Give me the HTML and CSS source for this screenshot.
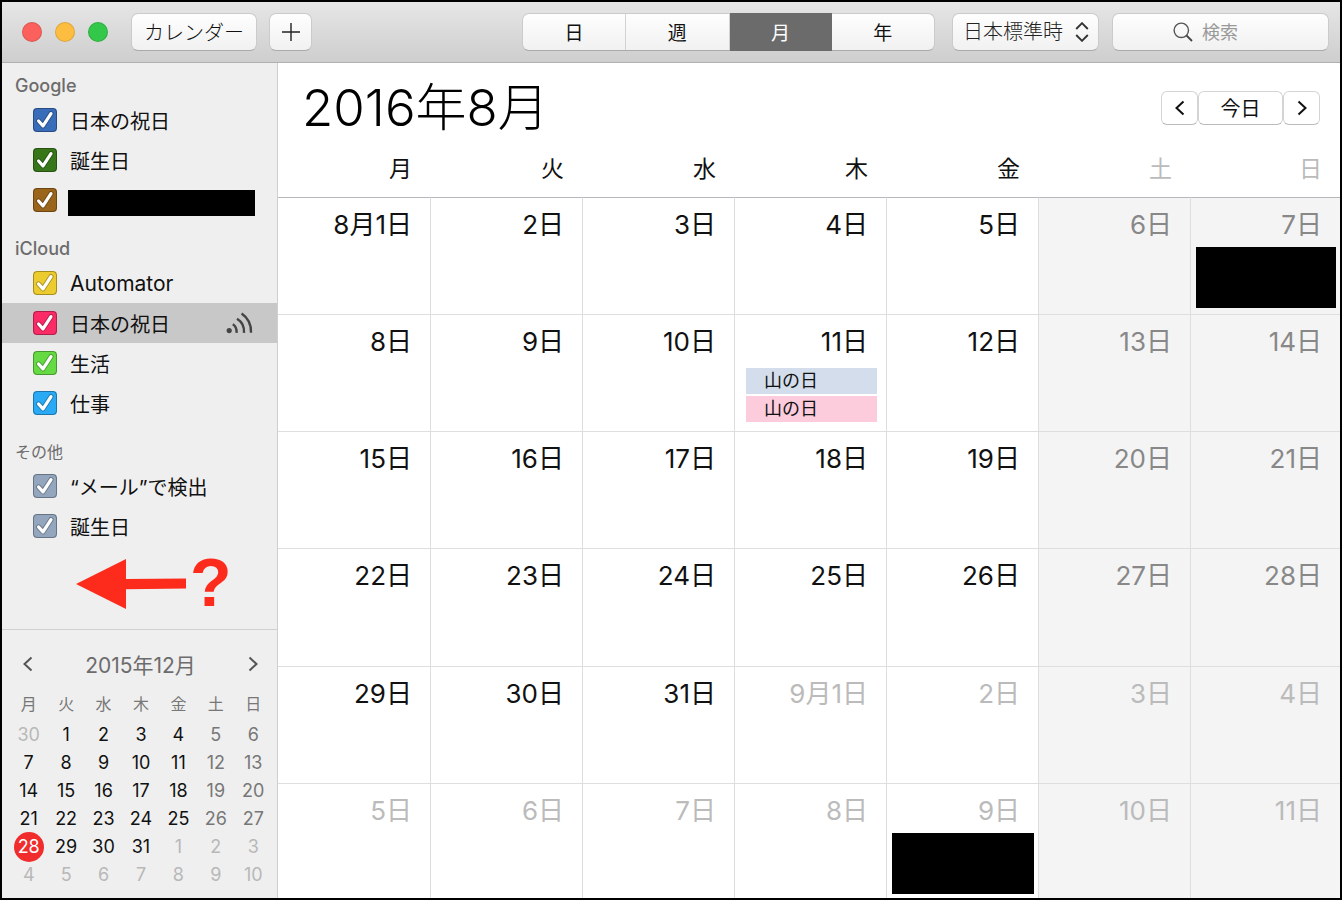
FILE: index.html
```html
<!DOCTYPE html>
<html lang="ja">

<head>
    <meta charset="UTF-8">
    <meta name="viewport" content="width=device-width, initial-scale=1.0">
    <title>カレンダー</title>
    <link rel="stylesheet" href="styles.css">
</head>

<body>
    <svg class="defs" width="0" height="0" aria-hidden="true">
        <symbol id="tick" viewBox="0 0 24 24">
            <path d="M5.600 13l4.400 4.800 8-12.200" fill="none" stroke="#000" stroke-opacity=".25" stroke-width="5.200" stroke-linecap="round" stroke-linejoin="round" />
            <path d="M5.600 13l4.400 4.800 8-12.200" fill="none" stroke="#fff" stroke-width="3.200" stroke-linecap="round" stroke-linejoin="round" />
        </symbol>
        <symbol id="prev" viewBox="0 0 10 16">
            <path d="M8.5 1.5L1.5 8l7 6.5" fill="none" stroke="currentColor" stroke-width="2" />
        </symbol>
        <symbol id="next" viewBox="0 0 10 16">
            <path d="M1.5 1.5l7 6.5-7 6.5" fill="none" stroke="currentColor" stroke-width="2" />
        </symbol>
    </svg>

    <div class="window">
        <header class="toolbar">
            <div class="lights">
                <button class="light close" aria-label="閉じる"></button>
                <button class="light minimize" aria-label="しまう"></button>
                <button class="light zoom" aria-label="拡大"></button>
            </div>
            <button class="btn calendars">カレンダー</button>
            <button class="btn add" aria-label="追加">
                <svg width="18" height="18" viewBox="0 0 18 18"><path d="M9 0v18M0 9h18" stroke="#222" stroke-width="1.4" /></svg>
            </button>
            <div class="segments">
                <button>日</button>
                <button>週</button>
                <button class="active">月</button>
                <button>年</button>
            </div>
            <div class="btn timezone">
                <select aria-label="時間帯">
                    <option>日本標準時</option>
                </select>
                <svg width="14" height="20" viewBox="0 0 14 20"><path d="M1.2 7L7 1.2 12.8 7M1.2 13L7 18.8 12.8 13" fill="none" stroke="#333" stroke-width="1.9" /></svg>
            </div>
            <label class="btn search">
                <svg width="20" height="20" viewBox="0 0 20 20"><circle cx="8.3" cy="8.3" r="7.2" fill="none" stroke="#555" stroke-width="1.4" /><path d="M13.5 13.5l5.5 5.5" stroke="#444" stroke-width="1.8" /></svg>
                <input type="text" placeholder="検索" aria-label="検索">
            </label>
        </header>

        <div class="content">
            <aside class="sidebar">
                <div class="lists">
                    <h2>Google</h2>
                    <ul>
                        <li><label><span class="check blue"><input type="checkbox" checked><svg><use href="#tick" /></svg></span>日本の祝日</label></li>
                        <li><label><span class="check green"><input type="checkbox" checked><svg><use href="#tick" /></svg></span>誕生日</label></li>
                        <li><label><span class="check brown"><input type="checkbox" checked aria-label="非公開"><svg><use href="#tick" /></svg></span><span class="hidden-name"></span></label></li>
                    </ul>
                    <h2>iCloud</h2>
                    <ul>
                        <li><label class="latin"><span class="check yellow"><input type="checkbox" checked><svg><use href="#tick" /></svg></span>Automator</label></li>
                        <li class="selected">
                            <label><span class="check pink"><input type="checkbox" checked><svg><use href="#tick" /></svg></span>日本の祝日</label>
                            <svg class="feed" width="28" height="22" viewBox="0 0 28 22">
                                <circle cx="3.2" cy="18.6" r="2.6" fill="#444" />
                                <path d="M6.8 12.2q4.200 2.600 3.800 8.600M11 6.800q7.600 4.600 7 14M15.600 1.500q10 6.800 9.400 19.300" fill="none" stroke="#444" stroke-width="2.400" />
                            </svg>
                        </li>
                        <li><label><span class="check lime"><input type="checkbox" checked><svg><use href="#tick" /></svg></span>生活</label></li>
                        <li><label><span class="check sky"><input type="checkbox" checked><svg><use href="#tick" /></svg></span>仕事</label></li>
                    </ul>
                    <h2 class="small">その他</h2>
                    <ul>
                        <li><label><span class="check gray"><input type="checkbox" checked><svg><use href="#tick" /></svg></span>“メール”で検出</label></li>
                        <li><label><span class="check gray"><input type="checkbox" checked><svg><use href="#tick" /></svg></span>誕生日</label></li>
                    </ul>
                    <div class="note">
                        <svg width="110" height="50" viewBox="0 0 110 50"><path d="M0 25L50 0v20l60-.5v10l-60 .8V50z" fill="#fd2b1c" /></svg>
                        <span>?</span>
                    </div>
                </div>

                <div class="mini">
                    <div class="mini-head">
                        <button aria-label="前の月"><svg width="10" height="16"><use href="#prev" /></svg></button>
                        <span>2015年12月</span>
                        <button aria-label="次の月"><svg width="10" height="16"><use href="#next" /></svg></button>
                    </div>
                    <table>
                        <thead>
                            <tr><th>月</th><th>火</th><th>水</th><th>木</th><th>金</th><th>土</th><th>日</th></tr>
                        </thead>
                        <tbody>
                            <tr><td class="out">30</td><td>1</td><td>2</td><td>3</td><td>4</td><td>5</td><td>6</td></tr>
                            <tr><td>7</td><td>8</td><td>9</td><td>10</td><td>11</td><td>12</td><td>13</td></tr>
                            <tr><td>14</td><td>15</td><td>16</td><td>17</td><td>18</td><td>19</td><td>20</td></tr>
                            <tr><td>21</td><td>22</td><td>23</td><td>24</td><td>25</td><td>26</td><td>27</td></tr>
                            <tr><td><span class="today">28</span></td><td>29</td><td>30</td><td>31</td><td class="out">1</td><td class="out">2</td><td class="out">3</td></tr>
                            <tr><td class="out">4</td><td class="out">5</td><td class="out">6</td><td class="out">7</td><td class="out">8</td><td class="out">9</td><td class="out">10</td></tr>
                        </tbody>
                    </table>
                </div>
            </aside>

            <main class="main">
                <div class="month-head">
                    <h1>2016年8月</h1>
                    <div class="nav">
                        <button class="arrow" aria-label="前の月"><svg width="10" height="16"><use href="#prev" /></svg></button>
                        <button class="today-btn">今日</button>
                        <button class="arrow" aria-label="次の月"><svg width="10" height="16"><use href="#next" /></svg></button>
                    </div>
                </div>
                <table class="month">
                    <thead>
                        <tr><th>月</th><th>火</th><th>水</th><th>木</th><th>金</th><th>土</th><th>日</th></tr>
                    </thead>
                    <tbody>
                        <tr>
                            <td><div class="date">8月1日</div></td>
                            <td><div class="date">2日</div></td>
                            <td><div class="date">3日</div></td>
                            <td><div class="date">4日</div></td>
                            <td><div class="date">5日</div></td>
                            <td><div class="date">6日</div></td>
                            <td><div class="date">7日</div><div class="hidden-event"></div></td>
                        </tr>
                        <tr>
                            <td><div class="date">8日</div></td>
                            <td><div class="date">9日</div></td>
                            <td><div class="date">10日</div></td>
                            <td>
                                <div class="date">11日</div>
                                <div class="events">
                                    <div class="event blue-event">山の日</div>
                                    <div class="event pink-event">山の日</div>
                                </div>
                            </td>
                            <td><div class="date">12日</div></td>
                            <td><div class="date">13日</div></td>
                            <td><div class="date">14日</div></td>
                        </tr>
                        <tr>
                            <td><div class="date">15日</div></td>
                            <td><div class="date">16日</div></td>
                            <td><div class="date">17日</div></td>
                            <td><div class="date">18日</div></td>
                            <td><div class="date">19日</div></td>
                            <td><div class="date">20日</div></td>
                            <td><div class="date">21日</div></td>
                        </tr>
                        <tr>
                            <td><div class="date">22日</div></td>
                            <td><div class="date">23日</div></td>
                            <td><div class="date">24日</div></td>
                            <td><div class="date">25日</div></td>
                            <td><div class="date">26日</div></td>
                            <td><div class="date">27日</div></td>
                            <td><div class="date">28日</div></td>
                        </tr>
                        <tr>
                            <td><div class="date">29日</div></td>
                            <td><div class="date">30日</div></td>
                            <td><div class="date">31日</div></td>
                            <td class="out"><div class="date">9月1日</div></td>
                            <td class="out"><div class="date">2日</div></td>
                            <td class="out"><div class="date">3日</div></td>
                            <td class="out"><div class="date">4日</div></td>
                        </tr>
                        <tr>
                            <td class="out"><div class="date">5日</div></td>
                            <td class="out"><div class="date">6日</div></td>
                            <td class="out"><div class="date">7日</div></td>
                            <td class="out"><div class="date">8日</div></td>
                            <td class="out"><div class="date">9日</div><div class="hidden-event"></div></td>
                            <td class="out"><div class="date">10日</div></td>
                            <td class="out"><div class="date">11日</div></td>
                        </tr>
                    </tbody>
                </table>
            </main>
        </div>
    </div>
</body>

</html>
```
FILE: styles.css
```css
* {
    box-sizing: border-box;
    margin: 0;
    padding: 0;
}

body,
button,
input,
select {
    font-family: Inter, "Noto Sans CJK JP", sans-serif;
    font-weight: 400;
    color: #111;
}

button {
    background: none;
    border: none;
}

svg {
    display: block;
}

.defs {
    display: none;
}

.window {
    display: flex;
    flex-direction: column;
    min-height: 100vh;
    margin-right: 1px;
    border: 2px solid #000;
    background: white;
}

/* Toolbar */
.toolbar {
    display: flex;
    align-items: center;
    height: 61px;
    padding: 0 11px 0 20px;
    background: linear-gradient(#e6e6e6, #cecece);
    border-bottom: 1px solid #b0b0b0;
}

.lights {
    display: flex;
    gap: 13px;
    margin-right: 23px;
}

.light {
    width: 20px;
    height: 20px;
    border-radius: 50%;
    border: 1px solid rgba(0, 0, 0, 0.12);
}

.close {
    background: #fc605c;
}

.minimize {
    background: #fdbd41;
}

.zoom {
    background: #34c84a;
}

.btn,
.segments {
    display: flex;
    align-items: center;
    justify-content: center;
    height: 38px;
    border: 1px solid #cbcbcb;
    border-bottom-color: #aaa;
    border-radius: 7px;
    background: linear-gradient(#fefefe, #f1f1f1);
    font-size: 20px;
}

.calendars {
    width: 126px;
    padding-bottom: 2px;
    font-weight: 300;
}

.add {
    width: 43px;
    margin-left: 12px;
}

.segments {
    width: 413px;
    margin-left: auto;
}

.segments button {
    flex: 1;
    height: 36px;
    padding-bottom: 2px;
    font-size: 19px;
    border-right: 1px solid #d2d2d2;
}

.segments button:last-child {
    border-right: none;
}

.segments .active {
    height: 38px;
    background: #6b6b6b;
    color: white;
    border-right: none;
}

.timezone {
    gap: 12px;
    width: 147px;
    margin-left: 17px;
}

.timezone select {
    appearance: none;
    width: 101px;
    padding-left: 1px;
    border: none;
    background: none;
    font-size: 20px;
    font-weight: 300;
    color: #222;
}

.search {
    gap: 9px;
    width: 217px;
    margin-left: 13px;
}

.search input {
    width: 66px;
    border: none;
    background: none;
    font-size: 18px;
}

.search input::placeholder {
    color: #999;
}

/* Sidebar */
.content {
    display: flex;
    flex: 1;
}

.sidebar {
    display: flex;
    flex-direction: column;
    flex: none;
    width: 276px;
    background: #efefef;
    border-right: 1px solid #cfcfcf;
}

.lists {
    flex: 1;
    padding-top: 7px;
}

.lists h2 {
    height: 30px;
    padding-left: 13px;
    font-size: 18px;
    font-weight: 500;
    line-height: 32px;
    color: #6c6c6c;
}

.lists .small {
    font-size: 16px;
    font-weight: 400;
}

.lists ul {
    margin-bottom: 13px;
    list-style: none;
}

.lists li {
    display: flex;
    align-items: center;
    justify-content: space-between;
    height: 40px;
    padding: 0 23px 0 31px;
}

.lists label {
    display: flex;
    align-items: center;
    gap: 13px;
    font-size: 20px;
    white-space: nowrap;
}

.lists .latin {
    font-size: 21px;
}

.lists .selected {
    background: #c8c8c8;
}

.check {
    display: grid;
    width: 24px;
    height: 24px;
    border-radius: 4px;
}

.check input,
.check svg {
    grid-area: 1 / 1;
    width: 24px;
    height: 24px;
}

.check input {
    appearance: none;
    border: 1px solid rgba(0, 0, 0, 0.3);
    border-radius: 4px;
}

.check svg {
    pointer-events: none;
}

.check input:not(:checked) + svg {
    visibility: hidden;
}

.blue {
    background: #3a6db9;
}

.green {
    background: #38761a;
}

.brown {
    background: #9a651b;
}

.yellow {
    background: #eccb2f;
}

.pink {
    background: #fb2b68;
}

.lime {
    background: #66da43;
}

.sky {
    background: #2aa9f5;
}

.gray {
    background: #93a6bd;
}

.hidden-name {
    width: 187px;
    height: 26px;
    margin: 6px 0 0 -2px;
    background: #000;
}

.note {
    display: flex;
    align-items: center;
    gap: 4px;
    height: 50px;
    padding-left: 74px;
    font-family: "Liberation Sans", Arial, sans-serif;
    font-size: 68px;
    font-weight: 700;
    line-height: 50px;
    color: #fd2b1c;
}

.note span {
    padding-bottom: 4px;
}

/* Small month */
.mini {
    padding: 13px 5px 9px 8px;
    border-top: 1px solid #d0d0d0;
}

.mini-head {
    display: flex;
    align-items: center;
    justify-content: space-between;
    height: 42px;
    padding: 0 14px 0 13px;
    font-size: 21px;
    color: #6c6c6c;
}

.mini-head button {
    color: #555;
}

.mini table {
    width: 100%;
    table-layout: fixed;
    border-collapse: collapse;
    text-align: center;
    font-size: 18px;
}

.mini th {
    height: 36px;
    font-size: 16px;
    font-weight: 400;
    color: #777;
}

.mini td {
    height: 28px;
    line-height: 28px;
}

.mini td:nth-child(n + 6) {
    color: #777;
}

.mini td.out {
    color: #b8b8b8;
}

.today {
    display: block;
    width: 30px;
    height: 30px;
    margin: -1px auto;
    line-height: 30px;
    border-radius: 50%;
    background: #f02c2c;
    color: white;
}

/* Month view */
.main {
    flex: 1;
    min-width: 0;
}

.month-head {
    display: flex;
    align-items: center;
    justify-content: space-between;
    height: 78px;
    padding: 12px 20px 0 24px;
}

.month-head h1 {
    font-size: 51px;
    font-weight: 300;
    line-height: 64px;
    color: #000;
}

.nav {
    display: flex;
}

.nav button {
    display: flex;
    align-items: center;
    justify-content: center;
    height: 34px;
    border: 1px solid #d4d4d4;
    border-bottom-color: #bbb;
    border-radius: 6px;
    background: white;
    font-size: 20px;
}

.nav .arrow {
    width: 37px;
}

.nav .today-btn {
    width: 85px;
    padding-bottom: 2px;
}

.month {
    width: 100%;
    height: calc(100vh - 143px);
    table-layout: fixed;
    border-spacing: 0;
    text-align: right;
}

.month th {
    height: 56px;
    padding: 0 18px 4px 0;
    font-size: 23px;
    font-weight: 400;
}

.month th:last-child {
    width: 150px;
}

.month th:nth-child(n + 6) {
    color: #bbb;
}

.month td {
    height: 117px;
    vertical-align: top;
    border-top: 1px solid #dedede;
    border-left: 1px solid #dedede;
}

.month td:first-child {
    border-left: none;
}

.month tr:first-child td {
    border-top-color: #b8b8bc;
}

.month tr:last-child td {
    height: 115px;
}

.month td:nth-child(n + 6) {
    background: #f4f4f4;
    color: #888;
}

.month td.out {
    color: #bbb;
}

.date {
    height: 49px;
    padding: 3px 18px 0 0;
    font-size: 26px;
    line-height: 48px;
}

.events {
    display: flex;
    flex-direction: column;
    gap: 2px;
    margin: 4px 9px 0 11px;
    text-align: left;
}

.event {
    height: 26px;
    padding-left: 18px;
    font-size: 18px;
    line-height: 26px;
}

.blue-event {
    background: #d3ddeb;
}

.pink-event {
    background: #fccbdc;
}

.hidden-event {
    height: 61px;
    margin: 0 4px 0 5px;
    background: #000;
}
```
